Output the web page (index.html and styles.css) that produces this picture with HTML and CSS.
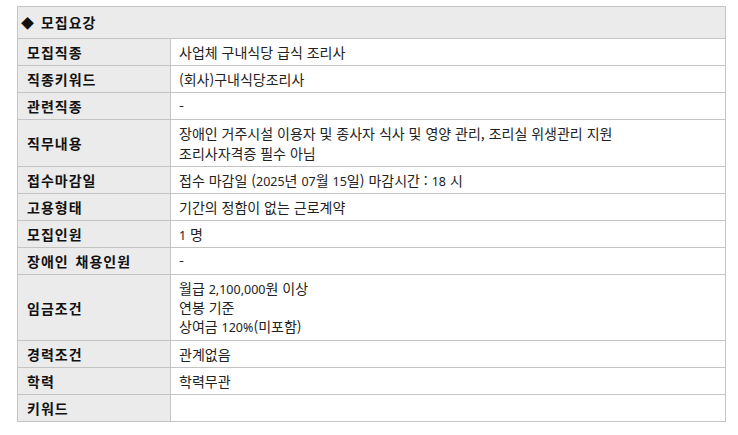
FILE: index.html
```html
<!DOCTYPE html>
<html lang="ko">
<head>
<meta charset="utf-8">
<link rel="stylesheet" href="styles.css">
</head>
<body>
<div class="wrap">
<table class="info">
  <colgroup><col class="c-label"><col class="c-value"></colgroup>
  <thead>
    <tr><th colspan="2" class="title"><span class="dia">◆</span> 모집요강</th></tr>
  </thead>
  <tbody>
    <tr><th>모집직종</th><td>사업체 구내식당 급식 조리사</td></tr>
    <tr><th>직종키워드</th><td>(회사)구내식당조리사</td></tr>
    <tr><th>관련직종</th><td>-</td></tr>
    <tr><th>직무내용</th><td>장애인 거주시설 이용자 및 종사자 식사 및 영양 관리, 조리실 위생관리 지원<br>조리사자격증 필수 아님</td></tr>
    <tr><th>접수마감일</th><td>접수 마감일 (<span class="num">2025</span>년 <span class="num">07</span>월 <span class="num">15</span>일) 마감시간 : <span class="num">18</span> 시</td></tr>
    <tr><th>고용형태</th><td>기간의 정함이 없는 근로계약</td></tr>
    <tr><th>모집인원</th><td><span class="num">1</span> 명</td></tr>
    <tr><th>장애인 채용인원</th><td>-</td></tr>
    <tr><th>임금조건</th><td class="multi">월급 <span class="num">2,100,000</span>원 이상<br>연봉 기준<br>상여금 <span class="num">120%</span>(미포함)</td></tr>
    <tr><th>경력조건</th><td>관계없음</td></tr>
    <tr><th>학력</th><td>학력무관</td></tr>
    <tr><th>키워드</th><td></td></tr>
  </tbody>
</table>
</div>
</body>
</html>
```
FILE: styles.css
```css
html, body {
  margin: 0;
  padding: 0;
  background: #fff;
}
.wrap {
  padding: 6px 0 0 17px;
}
.info {
  width: 708px;
  table-layout: fixed;
  border-collapse: collapse;
  border: 1px solid #c4c4c4;
  font-family: "Noto Sans CJK KR", sans-serif;
  font-size: 14px;
  color: #222;
}
.c-label { width: 153px; }
.c-value { width: 555px; }
.info th, .info td {
  border: 1px solid #c4c4c4;
  padding: 3px 8px;
  line-height: 20px;
  height: 20px;
  text-align: left;
  vertical-align: middle;
}
.info td.multi {
  line-height: 19px;
  padding: 4px 8px 4px;
}
.info th {
  background: #ebebeb;
  font-weight: bold;
  font-size: 14px;
  letter-spacing: 1px;
  word-spacing: 2px;
  padding-left: 9px;
  color: #111;
}
.info td {
  background: #fff;
  font-weight: normal;
}
.num {
  font-family: "Noto Sans", sans-serif;
  font-size: 12.5px;
  line-height: 1;
}
.info th.title {
  padding: 5px 8px 5px 3px;
  height: 20px;
}
.dia {
  font-size: 13px;
  letter-spacing: 0;
}
```
